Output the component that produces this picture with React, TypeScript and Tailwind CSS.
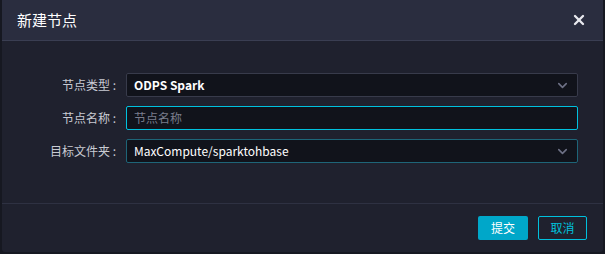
import { ChevronDown, X } from 'lucide-react'

const font = { fontFamily: '"Noto Sans CJK SC", "Liberation Sans", sans-serif' }

function Row({ label, children }: { label: string; children: React.ReactNode }) {
  return (
    <div className="flex items-center h-6">
      <div className="w-[116px] pr-[2px] text-right text-[12px] text-[#c9cbd3] whitespace-pre">{label} :</div>
      <div className="ml-[8px] w-[452px] h-6">{children}</div>
    </div>
  )
}

export default function App() {
  return (
    <div className="w-[605px] h-[254px] bg-[#161821] pl-[2px] pr-[2px] pb-[2px]" style={font}>
      <div className="w-[601px] h-[252px] flex flex-col bg-[#1f212e] rounded-b-[3px] overflow-hidden">
        <div className="h-[41px] flex items-center justify-between px-[15px] bg-[#2a2d3f] border-b border-[#3a3e52]">
          <span className="text-[15px] text-white">新建节点</span>
          <X size={16} strokeWidth={3.5} className="text-[#e8e9ee] mr-[1px]" />
        </div>
        <div className="flex flex-col gap-[9px] pt-[32px] h-[163px] border-b border-[#2e3142]">
          <Row label="节点类型">
            <div className="h-6 flex items-center justify-between px-[7px] bg-[#11131b] border border-[#383b4b] rounded-[2px]">
              <span className="text-[12px] font-semibold text-white">ODPS Spark</span>
              <ChevronDown size={15} strokeWidth={2.5} className="text-[#6e7186]" />
            </div>
          </Row>
          <Row label="节点名称">
            <div className="h-6 flex items-center px-[7px] bg-[#11131b] border border-[#00c1de] rounded-[2px]">
              <span className="text-[12px] text-[#7a7d8c]">节点名称</span>
            </div>
          </Row>
          <Row label="目标文件夹">
            <div className="h-6 flex items-center justify-between px-[7px] bg-[#11131b] border border-[#1e6578] rounded-[2px]">
              <span className="text-[12px] text-white">MaxCompute/sparktohbase</span>
              <ChevronDown size={15} strokeWidth={2.5} className="text-[#6e7186]" />
            </div>
          </Row>
        </div>
        <div className="flex justify-end gap-[10px] pt-[12px] pr-[16px]">
          <button className="w-[50px] h-6 bg-[#00a7c9] rounded-[2px] text-[12px] text-white">提交</button>
          <button className="w-[49px] h-6 border border-[#00c1de] rounded-[2px] text-[12px] text-[#00c1de]">取消</button>
        </div>
      </div>
    </div>
  )
}
